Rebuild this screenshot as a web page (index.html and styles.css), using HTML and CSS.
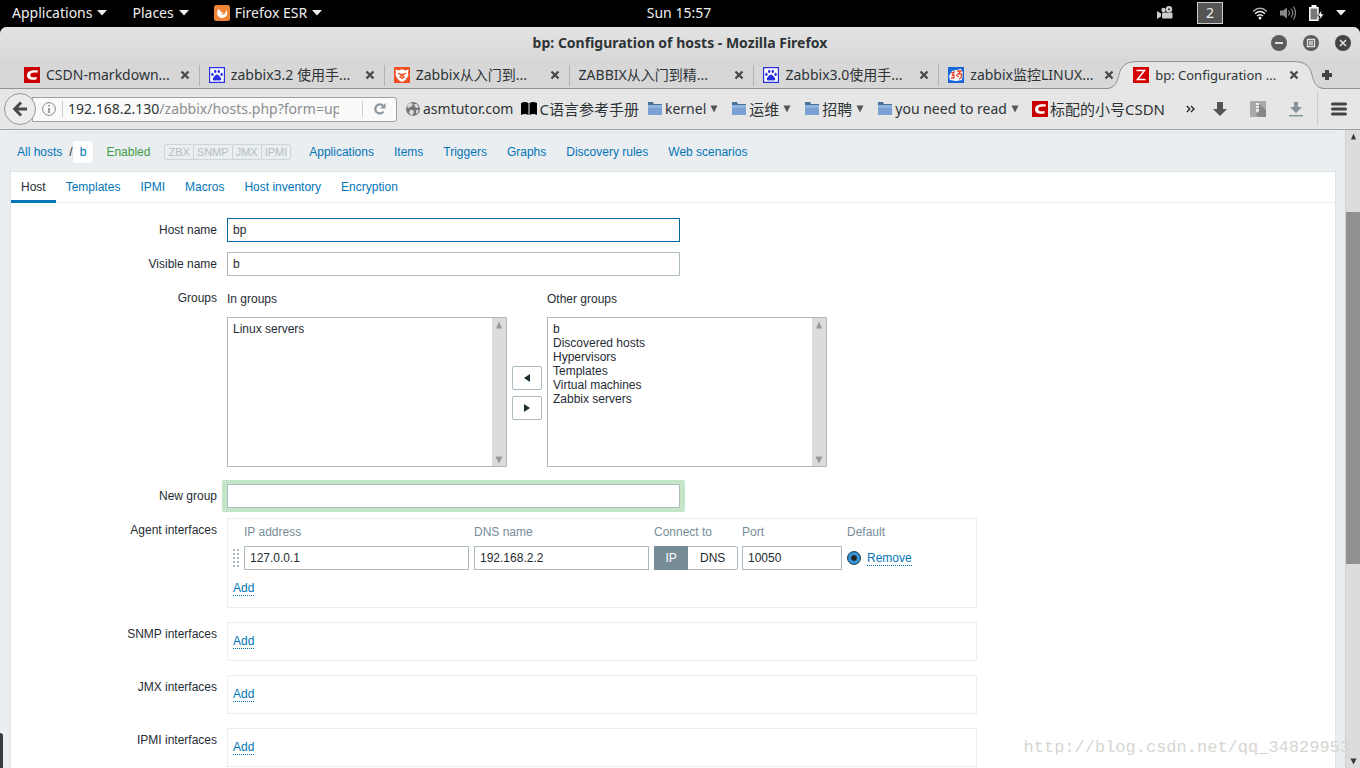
FILE: index.html
```html
<!DOCTYPE html>
<html lang="en">
<head>
<meta charset="utf-8">
<title>bp: Configuration of hosts - Mozilla Firefox</title>
<link rel="stylesheet" href="styles.css">
</head>
<body>
<svg class="defs" aria-hidden="true">
  <symbol id="paw" viewBox="0 0 16 16"><path fill="#fff" stroke="#2932e1" stroke-width="1.2" d="M.6.6h14.800v14.800H.6z"/><g fill="#2932e1"><ellipse cx="3.400" cy="7.400" rx="1.200" ry="1.600"/><ellipse cx="6.200" cy="4.400" rx="1.200" ry="1.700"/><ellipse cx="9.800" cy="4.400" rx="1.200" ry="1.700"/><ellipse cx="12.600" cy="7.400" rx="1.200" ry="1.600"/><path d="M8 7.600c1.600 0 2.200 1.600 3.400 2.600 1.400 1.200 1.100 3.200-.8 3.300-1 0-1.600-.3-2.600-.3s-1.600.3-2.600.3c-1.900-.1-2.200-2.100-.8-3.300C5.800 9.200 6.400 7.600 8 7.600z"/></g></symbol>
  <symbol id="csdn" viewBox="0 0 16 16"><path fill="#c80000" d="M0 0h16v16H0z"/><path fill="#fff" d="M14 3.500l-.6 2.300C9 5.300 6.500 5.800 6.300 8c-.2 2.300 2 2.600 6.600 2.200l-.6 2.300C6.500 13.200 2.800 12 3 8.200 3.300 4 7.500 2.700 14 3.500z"/></symbol>
  <symbol id="folder" viewBox="0 0 16 16"><path fill="#4a7299" d="M1 1h5l1 2h8v3H1z"/><path fill="#79a1d3" d="M1 4h14v10H1z"/><path fill="#8fb2de" d="M1 4h14v3H1z"/></symbol>
  <symbol id="x" viewBox="0 0 10 10"><path fill="none" stroke="#4a4a4a" stroke-width="2.400" d="M1.500 1.500l7 7m0-7l-7 7"/></symbol>
  <symbol id="down" viewBox="0 0 10 6"><path fill="currentColor" d="M0 0h10L5 5.500z"/></symbol>
  <symbol id="tri-up" viewBox="0 0 8 8"><path fill="currentColor" d="M1 7.500L4 .5l3 7z"/></symbol>
  <symbol id="tri-down" viewBox="0 0 8 8"><path fill="currentColor" d="M.5.5h7L4 7.500z"/></symbol>
</svg>

<header class="panel">
  <nav class="menus">
    <button>Applications <svg class="caret"><use href="#down"/></svg></button>
    <button>Places <svg class="caret"><use href="#down"/></svg></button>
    <button><svg class="i16 app" viewBox="0 0 16 16"><rect width="16" height="16" rx="2.500" fill="#ee8434"/><path fill="#fff" d="M5 3.500C2 6 2.500 13 8 13c5.500 0 6.300-5.500 4-8.500C12.500 9 9 10.500 7 9c1.500 0 2-.7 2.500-1.500C7.500 7.800 6 7 7 5.500 5.500 6 5 5 5 3.500z"/></svg>Firefox ESR <svg class="caret"><use href="#down"/></svg></button>
  </nav>
  <time>Sun 15:57</time>
  <div class="tray">
    <svg class="cam" viewBox="0 0 16 14"><g fill="#ccc"><circle cx="6.500" cy="4" r="2.200"/><circle cx="12" cy="3.300" r="3.200"/><rect x="5" y="6.500" width="10.500" height="6" rx="1"/><path d="M0 5l4 2.500v3L0 13z"/></g><circle cx="12" cy="3.300" r="1" fill="#333"/></svg>
    <span class="workspace">2</span>
    <svg class="wifi" viewBox="0 0 16 14"><g fill="none" stroke="#eee" stroke-width="1.500"><path stroke="#aaa" d="M1 5.500q7-6.500 14 0"/><path d="M3 7.800q5-4.500 10 0M5 10q3-2.600 6 0"/></g><circle cx="8" cy="12" r="1.500" fill="#eee"/></svg>
    <svg class="i16" viewBox="0 0 16 16"><path fill="#888" d="M0 5.500h3l4-3v11l-4-3H0z"/><path fill="none" stroke="#888" stroke-width="1.200" d="M8.500 5.500q2 2.500 0 5M11 3.500q3.500 4.500 0 9M13.500 1.500q4 6.500 0 13"/></svg>
    <svg class="i16" viewBox="0 0 16 16"><path fill="#777" stroke="#fff" stroke-width="1.500" d="M1.800 2.700H10v12.500H1.800z"/><path fill="#fff" d="M3.500 0h5v3h-5z"/><path fill="#fff" stroke="#000" stroke-width=".6" d="M13.500 5L9.500 11h2.500l-1 4.500 5-6.500h-2.500z"/></svg>
    <svg class="caret"><use href="#down"/></svg>
  </div>
</header>

<div class="window">
  <div class="titlebar">
    <h1>bp: Configuration of hosts - Mozilla Firefox</h1>
    <div class="controls">
      <button aria-label="Minimize"><svg class="i16" viewBox="0 0 16 16"><circle cx="8" cy="8" r="8" fill="#5c5c5c"/><path stroke="#e0e0e0" stroke-width="2" d="M4 8h8"/></svg></button>
      <button aria-label="Maximize"><svg class="i16" viewBox="0 0 16 16"><circle cx="8" cy="8" r="8" fill="#5c5c5c"/><path fill="none" stroke="#e0e0e0" stroke-width="1.300" d="M4.500 4.500h7v7h-7z"/><path fill="#bbb" d="M6 6h4v4H6z"/></svg></button>
      <button aria-label="Close"><svg class="i16" viewBox="0 0 16 16"><circle cx="8" cy="8" r="8" fill="#444"/><path stroke="#e0e0e0" stroke-width="1.600" d="M5 5l6 6m0-6l-6 6"/></svg></button>
    </div>
  </div>

  <div class="tabstrip">
    <div class="tabs">
      <div class="tab"><svg class="i16"><use href="#csdn"/></svg><span>CSDN-markdown...</span><button aria-label="Close tab"><svg><use href="#x"/></svg></button></div>
      <div class="tab"><svg class="i16"><use href="#paw"/></svg><span>zabbix3.2 使用手...</span><button aria-label="Close tab"><svg><use href="#x"/></svg></button></div>
      <div class="tab"><svg class="i16" viewBox="0 0 16 16"><path fill="#f04e23" d="M0 0h16v16H0z"/><path fill="#fff" d="M1.500 2.500L5 3.500 8 2l3 1.500 3.500-1-.5 4 .5 2-3 4.500-3.500 2-3.500-2-3-4.500.5-2z"/><path fill="none" stroke="#f04e23" stroke-width="1.300" d="M4 6l2.500 1.500h3L12 6M6 10l2-2 2 2-2 1.500z"/></svg><span>Zabbix从入门到...</span><button aria-label="Close tab"><svg><use href="#x"/></svg></button></div>
      <div class="tab"><span>ZABBIX从入门到精...</span><button aria-label="Close tab"><svg><use href="#x"/></svg></button></div>
      <div class="tab"><svg class="i16"><use href="#paw"/></svg><span>Zabbix3.0使用手...</span><button aria-label="Close tab"><svg><use href="#x"/></svg></button></div>
      <div class="tab"><svg class="i16" viewBox="0 0 16 16"><path fill="#1668d8" d="M0 0h16v16H0z"/><path fill="#fff" d="M1 9l3-5 4-1 5-1 2 4-1 7-6 1-6-1z"/><path fill="none" stroke="#e8452c" stroke-width="1.300" d="M3 6l3-1-2 4m-1 2h3V8H4M9 4h4l-3 3h4l-1 4-2 1M8 8l3 2"/></svg><span>zabbix监控LINUX...</span><button aria-label="Close tab"><svg><use href="#x"/></svg></button></div>
      <div class="tab active">
        <div class="shape"><svg viewBox="0 0 32 28"><path fill="#e6e6e6" d="M0 28C8 27 10 22 12 14 14 5 18 1 32 1V28z"/><path fill="none" stroke="#8f9296" d="M0 27.500C8 26.500 10 22 12 14 14 5 18 .5 32 .5"/></svg><i></i><svg viewBox="0 0 32 28"><path fill="#e6e6e6" d="M32 28C24 27 22 22 20 14 18 5 14 1 0 1V28z"/><path fill="none" stroke="#8f9296" d="M32 27.500C24 26.500 22 22 20 14 18 5 14 .5 0 .5"/></svg></div>
        <svg class="i16" viewBox="0 0 16 16"><path fill="#d40000" d="M0 0h16v16H0z"/><path fill="none" stroke="#fff" stroke-width="1.500" d="M3.500 3.500h8L4.500 12.500h8"/></svg><span>bp: Configuration ...</span><button aria-label="Close tab"><svg><use href="#x"/></svg></button></div>
    </div>
    <button class="newtab" aria-label="New tab"><svg viewBox="0 0 12 12"><path fill="none" stroke="#444" stroke-width="4" d="M6 1v10M1 6h10"/></svg></button>
  </div>

  <div class="navbar">
    <button class="back" aria-label="Back"><svg class="i16" viewBox="0 0 16 16"><path fill="none" stroke="#4a4a4a" stroke-width="3" d="M9 1.500L2.700 8 9 14.500M3 8h12"/></svg></button>
    <div class="urlbar">
      <svg class="info" viewBox="0 0 14 14"><circle cx="7" cy="7" r="6.400" fill="none" stroke="#888" stroke-width="1"/><path stroke="#888" stroke-width="1.600" d="M7 3v1.600M7 6v5"/></svg>
      <label class="url"><span>192.168.2.130</span><input aria-label="Address" value="/zabbix/hosts.php?form=update"></label>
      <button class="reload" aria-label="Reload"><svg viewBox="0 0 14 14"><path fill="none" stroke="#8a959c" stroke-width="2.200" d="M10.500 9.500A4.500 4.500 0 1 1 10 3.800"/><path fill="#8a959c" d="M12.500 1v5.500H7z"/></svg></button>
    </div>
    <nav class="bookmarks">
      <a href="#"><svg class="i16" viewBox="0 0 16 16"><circle cx="8" cy="8" r="7" fill="#777"/><path fill="#d8d8d8" d="M3 3l3-1 2 1-1 2-3 2-2-1zM9 3l3 0 2 3-2 1-2-1zM5 9l3 0 1 2-2 4-3-3zM11 9l3 0-2 4-1-1z"/></svg>asmtutor.com</a>
      <a href="#" class="cjk"><svg class="i16" viewBox="0 0 16 16"><path d="M0 2q4-2 7.500 0v12q-3.500-2-7.500 0zM8.500 2q3.500-2 7.500 0v12q-4-2-7.500 0z"/></svg>C语言参考手册</a>
      <a href="#"><svg class="i16"><use href="#folder"/></svg>kernel<svg class="drop"><use href="#tri-down"/></svg></a>
      <a href="#" class="cjk"><svg class="i16"><use href="#folder"/></svg>运维<svg class="drop"><use href="#tri-down"/></svg></a>
      <a href="#" class="cjk"><svg class="i16"><use href="#folder"/></svg>招聘<svg class="drop"><use href="#tri-down"/></svg></a>
      <a href="#"><svg class="i16"><use href="#folder"/></svg>you need to read<svg class="drop"><use href="#tri-down"/></svg></a>
      <a href="#" class="cjk"><svg class="i16"><use href="#csdn"/></svg>标配的小号CSDN</a>
    </nav>
    <div class="tools">
      <button class="more" aria-label="More bookmarks"><svg viewBox="0 0 9 8"><path fill="none" stroke="#222" stroke-width="1.300" d="M.8 1l3 3-3 3M5 1l3 3-3 3"/></svg></button>
      <button aria-label="Save"><svg class="i16" viewBox="0 0 16 16"><path fill="#555" d="M5 1h6v7h4l-7 7-7-7h4z"/></svg></button>
      <button aria-label="Archive"><svg class="i16" viewBox="0 0 16 16"><path fill="#a9a9a9" d="M0 0h16v16H0z"/><path fill="#888" d="M9 3l7 6v7H8l-2-3z"/><path fill="#eee" d="M6 2h3v2H6zM6 5h3v2H6zM6 8h3v2l-1.500 2L6 10z"/></svg></button>
      <button aria-label="Downloads"><svg class="i16" viewBox="0 0 16 16"><path fill="#829496" d="M6 1h4v5h4l-6 6-6-6h4zM1 14h14v1.500H1z"/></svg></button>
      <button class="menu" aria-label="Menu"><svg class="i16" viewBox="0 0 16 16"><path stroke="#444" stroke-width="3" stroke-linecap="round" d="M1.500 3h13M1.500 8h13M1.500 13h13"/></svg></button>
    </div>
  </div>

  <div class="viewport">
    <main class="page">
      <nav class="hostnav">
        <div class="crumbs"><a href="#">All hosts</a><span>/</span><a href="#" class="current">b</a></div>
        <span class="enabled">Enabled</span>
        <div class="status"><span>ZBX</span><span>SNMP</span><span>JMX</span><span>IPMI</span></div>
        <a href="#">Applications</a><a href="#">Items</a><a href="#">Triggers</a><a href="#">Graphs</a><a href="#">Discovery rules</a><a href="#">Web scenarios</a>
      </nav>
      <section class="card">
        <div class="formtabs" role="tablist">
          <button role="tab" aria-selected="true">Host</button><button role="tab">Templates</button><button role="tab">IPMI</button><button role="tab">Macros</button><button role="tab">Host inventory</button><button role="tab">Encryption</button>
        </div>
        <form>
          <div class="row"><label for="host">Host name</label><input class="text focus" id="host" value="bp"></div>
          <div class="row"><label for="visible">Visible name</label><input class="text" id="visible" value="b"></div>
          <div class="row"><span class="label">Groups</span>
            <div class="groups">
              <div class="list"><label for="in">In groups</label>
                <div class="listbox"><select id="in" multiple><option>Linux servers</option></select><div class="minibar"><svg><use href="#tri-up"/></svg><svg><use href="#tri-down"/></svg></div></div></div>
              <div class="movers"><button type="button" aria-label="Add to groups"><svg viewBox="0 0 8 8"><path fill="#1f2c33" d="M7 0v8L1 4z"/></svg></button><button type="button" aria-label="Remove from groups"><svg viewBox="0 0 8 8"><path fill="#1f2c33" d="M1 0v8l6-4z"/></svg></button></div>
              <div class="list"><label for="other">Other groups</label>
                <div class="listbox"><select id="other" multiple><option>b</option><option>Discovered hosts</option><option>Hypervisors</option><option>Templates</option><option>Virtual machines</option><option>Zabbix servers</option></select><div class="minibar"><svg><use href="#tri-up"/></svg><svg><use href="#tri-down"/></svg></div></div></div>
            </div>
          </div>
          <div class="row newgroup"><label for="newgroup">New group</label><div class="halo"><input class="text" id="newgroup"></div></div>
          <div class="row agent"><span class="label">Agent interfaces</span>
            <div class="box">
              <table>
                <colgroup><col class="c-drag"><col class="c-ip"><col class="c-dns"><col class="c-conn"><col class="c-port"><col></colgroup>
                <thead><tr><th></th><th>IP address</th><th>DNS name</th><th>Connect to</th><th>Port</th><th>Default</th></tr></thead>
                <tbody><tr>
                  <td><svg class="drag" viewBox="0 0 6 18"><path fill="none" stroke="#acbbc2" stroke-width="2" stroke-dasharray="2 2" d="M1 0v18M5 0v18"/></svg></td>
                  <td><input class="text" aria-label="IP address" value="127.0.0.1"></td>
                  <td><input class="text" aria-label="DNS name" value="192.168.2.2"></td>
                  <td><div class="segmented"><button type="button" class="on">IP</button><button type="button">DNS</button></div></td>
                  <td><input class="text" aria-label="Port" value="10050"></td>
                  <td><div class="default"><input type="radio" aria-label="Default" checked><a href="#" class="action">Remove</a></div></td>
                </tr></tbody>
              </table>
              <a href="#" class="action">Add</a>
            </div>
          </div>
          <div class="row iface"><span class="label">SNMP interfaces</span><div class="box"><a href="#" class="action">Add</a></div></div>
          <div class="row iface"><span class="label">JMX interfaces</span><div class="box"><a href="#" class="action">Add</a></div></div>
          <div class="row iface"><span class="label">IPMI interfaces</span><div class="box"><a href="#" class="action">Add</a></div></div>
        </form>
      </section>
    </main>
    <div class="scrollbar"><svg><use href="#tri-up"/></svg><div class="before"></div><div class="thumb"></div><div class="after"></div><svg><use href="#tri-down"/></svg></div>
    <div class="edge"></div>
    <div class="watermark">http://blog.csdn.net/qq_34829953</div>
  </div>
</div>
</body>
</html>
```
FILE: styles.css
```css
* { box-sizing: border-box; }
body {
  margin: 0; height: 100vh; overflow: hidden; display: flex; flex-direction: column;
  background: #000; color: #2e3436;
  font: 14px/20px "Noto Sans", "Noto Sans CJK SC", sans-serif;
}
button { font: inherit; color: inherit; background: none; border: 0; padding: 0; display: flex; align-items: center; }
a { text-decoration: none; color: inherit; }
svg { flex: none; display: block; }
.defs { position: absolute; width: 0; height: 0; }
.i16 { width: 16px; height: 16px; }
.caret { width: 10px; height: 6px; }

.panel { height: 27px; flex: none; display: grid; grid-template-columns: 1fr auto 1fr; align-items: center; color: #eee; padding: 0 14px 2px 12px; }
.menus { display: flex; gap: 25px; }
.menus button { gap: 5px; white-space: nowrap; }
.tray { display: flex; justify-content: flex-end; align-items: center; gap: 12px; }
.cam { width: 16px; height: 14px; margin-right: 12px; }
.workspace { width: 26px; height: 22px; border: 1px solid #ccc; background: #555; text-align: center; margin-right: 17px; }
.wifi { width: 16px; height: 14px; }

.window { flex: 1; min-height: 0; display: flex; flex-direction: column; background: #e6e6e6; border-radius: 7px 7px 0 0; overflow: hidden; }
.titlebar { height: 34px; flex: none; display: grid; grid-template-columns: 1fr auto 1fr; align-items: center; padding: 0 9px 2px; background: linear-gradient(#e3e3e3, #d8d8d8); }
.titlebar h1 { grid-column: 2; margin: 0; font-size: 14px; line-height: 20px; }
.controls { display: flex; justify-content: flex-end; gap: 16px; }

.tabstrip { height: 28px; flex: none; display: flex; align-items: stretch; padding-left: 14px; background: #d7d7d7; border-bottom: 1px solid #8f9296; }
.tabs { flex: 1; display: flex; min-width: 0; }
.tab { flex: 1 1 0; min-width: 0; position: relative; display: flex; align-items: center; gap: 6px; padding: 0 9px 0 10px; white-space: nowrap; height: 27px; }
.tab span { flex: 1; min-width: 0; overflow: hidden; }
.tab button svg { width: 10px; height: 10px; }
.tab + .tab:not(.active)::before { content: ""; position: absolute; left: 0; top: 4px; height: 21px; width: 1px; background: #b2b2b2; }
.tab.active { z-index: 1; font-size: 13px; }
.tab.active > * { position: relative; }
.tab.active .shape { position: absolute; left: -16px; right: -16px; top: 0; height: 28px; display: flex; }
.shape svg { width: 32px; height: 28px; }
.shape i { flex: 1; background: #e6e6e6; border-top: 1px solid #8f9296; }
.newtab { width: 52px; padding-left: 13px; }
.newtab svg { width: 12px; height: 12px; }

.navbar { height: 41px; flex: none; display: flex; align-items: center; padding-left: 4px; border-bottom: 1px solid #a3a3a3; background: #e6e6e6; }
.back { width: 32px; height: 32px; border: 1px solid #999; border-radius: 50%; background: #ececec; justify-content: center; z-index: 1; }
.urlbar { width: 365px; margin-left: -4px; height: 25px; display: flex; align-items: center; background: #fafafa; border: 1px solid #a0a0a0; border-radius: 0 3px 3px 0; padding-left: 9px; }
.info { width: 14px; height: 14px; }
.url { flex: 1; min-width: 0; display: flex; align-items: center; height: 16px; margin-left: 6px; padding: 0 23px 0 5px; border-left: 1px solid #ccc; border-right: 1px solid #ccc; }
.url span { color: #2e3436; }
.url input { flex: 1; min-width: 0; border: 0; padding: 0; background: none; font: inherit; color: #8b8e8f; outline: 0; }
.reload { width: 33px; justify-content: center; }
.reload svg { width: 14px; height: 14px; }
.bookmarks { flex: 1; min-width: 0; display: flex; gap: 8px; margin-left: 8px; white-space: nowrap; }
.bookmarks a { display: flex; align-items: center; gap: 2px; }
.bookmarks .cjk { font-size: 15px; }
.drop { width: 8px; height: 8px; margin: 0 5px 0 2px; color: #555; }
.tools { display: flex; align-items: center; gap: 22px; padding-right: 13px; height: 100%; }
.tools .more { margin-right: -5px; }
.more svg { width: 9px; height: 8px; }
.tools .menu { border-left: 1px solid #ccc; height: 34px; padding-left: 13px; margin-left: -9px; }

.viewport { flex: 1; min-height: 0; display: flex; position: relative; font: 12px/14px "Liberation Sans", Arial, sans-serif; color: #1f2c33; background: #ebeef0; }
.page { flex: 1; min-width: 0; padding: 2px 9px 0 10px; overflow: hidden; }
.page a { color: #0275b8; }
.hostnav { border-top: 1px solid #dfe4e7; height: 39px; display: flex; align-items: center; gap: 20px; padding-left: 7px; }
.crumbs { display: flex; align-items: center; margin-right: -7px; }
.crumbs span { margin-left: 7px; }
.crumbs .current { background: #fff; border-radius: 2px; padding: 4px 7px; box-shadow: 0 0 1px #b8c4ca; }
.enabled { color: #429e47; margin-right: -6px; }
.status { display: flex; border: 1px solid #ccd5d9; border-radius: 2px; font-size: 11px; line-height: 14px; color: #b4c0c6; margin-right: -2px; }
.status span { padding: 0 3px; }
.status span + span { border-left: 1px solid #ccd5d9; }
.card { background: #fff; border: 1px solid #dfe4e7; height: 620px; }
.formtabs { display: flex; border-bottom: 1px solid #ebeef0; height: 31px; }
.formtabs button { padding: 1px 10px 0; color: #0275b8; border-bottom: 3px solid transparent; height: 31px; }
.formtabs button[aria-selected] { color: #1f2c33; border-color: #0275b8; }
form { padding-top: 15px; }
.row { display: grid; grid-template-columns: 206px 1fr; column-gap: 10px; margin-bottom: 10px; align-items: start; }
.row > label, .label { text-align: right; line-height: 24px; }
.text { width: 453px; height: 24px; border: 1px solid #acbbc2; padding: 0 5px; font: inherit; color: inherit; background: #fff; outline: 0; border-radius: 0; display: block; }
.text.focus { border-color: #00669e; }
.groups { display: flex; gap: 5px; padding-top: 6px; }
.list { width: 280px; }
.list label { display: block; margin-bottom: 11px; }
.listbox { height: 150px; border: 1px solid #acbbc2; display: flex; }
.listbox select { flex: 1; min-width: 0; border: 0; padding: 4px 3px; font: inherit; color: inherit; background: #fff; outline: 0; overflow: hidden; }
.listbox option { padding: 0 2px; min-height: 14px; line-height: 14px; }
.minibar { width: 14px; background: #dcdcdc; display: flex; flex-direction: column; justify-content: space-between; align-items: center; padding: 3px 0 2px; color: #999; }
.minibar svg { width: 8px; height: 8px; }
.movers { display: flex; flex-direction: column; justify-content: center; gap: 6px; padding-top: 27px; }
.movers button { width: 30px; height: 24px; border: 1px solid #acbbc2; border-radius: 2px; justify-content: center; }
.movers svg { width: 8px; height: 8px; }
.newgroup { grid-template-columns: 206px 1fr; column-gap: 5px; margin: 13px 0 6px; }
.newgroup > label { line-height: 32px; }
.halo { width: 463px; padding: 4px 5px; background: #c5e5c8; border-radius: 2px; }
.box { width: 750px; border: 1px solid #ebeef0; padding: 4px 5px 11px; }
.agent, .iface { margin-bottom: 14px; }
table { table-layout: fixed; width: 100%; border-collapse: collapse; margin-bottom: 11px; }
.c-drag { width: 11px; } .c-ip { width: 230px; } .c-dns { width: 180px; } .c-conn { width: 88px; } .c-port { width: 105px; }
th { font-weight: 400; text-align: left; color: #768d99; padding: 2px 0; line-height: 14px; }
td { padding: 5px 5px 0 0; }
td .text { width: 100%; }
.drag { width: 6px; height: 18px; }
.segmented { display: flex; width: 84px; height: 24px; border: 1px solid #acbbc2; border-radius: 2px; }
.segmented button { flex: 48; justify-content: center; }
.segmented .on { flex: 34; background: #768d99; color: #fff; margin: -1px 0 -1px -1px; }
.default { display: flex; align-items: center; gap: 6px; }
input[type=radio] { appearance: none; width: 14px; height: 14px; margin: 0; border-radius: 50%; border: 1px solid #2a4a60; background: radial-gradient(circle, #222 0 2px, #3a9fe0 4px 5px, #1b6ca8 6px); }
.action { display: inline-block; border-bottom: 1px dotted #0275b8; line-height: 14px; }
.iface .box { padding: 11px 5px; }

.scrollbar { width: 15px; background: #dcdcdc; border-left: 1px solid #d0d0d0; display: flex; flex-direction: column; align-items: center; padding: 3px 0; color: #3a3a3a; }
.scrollbar svg { width: 7px; height: 7px; }
.before { flex: 72; } .thumb { flex: 352; width: 100%; background: #919191; } .after { flex: 194; }
.edge { position: absolute; left: 0; bottom: 0; width: 3px; height: 35px; background: #3a3a3a; border-radius: 0 4px 0 0; }
.watermark { position: absolute; right: 10px; bottom: 10px; font: 17px/20px "Liberation Mono", monospace; color: #d6d6d2; }
```
